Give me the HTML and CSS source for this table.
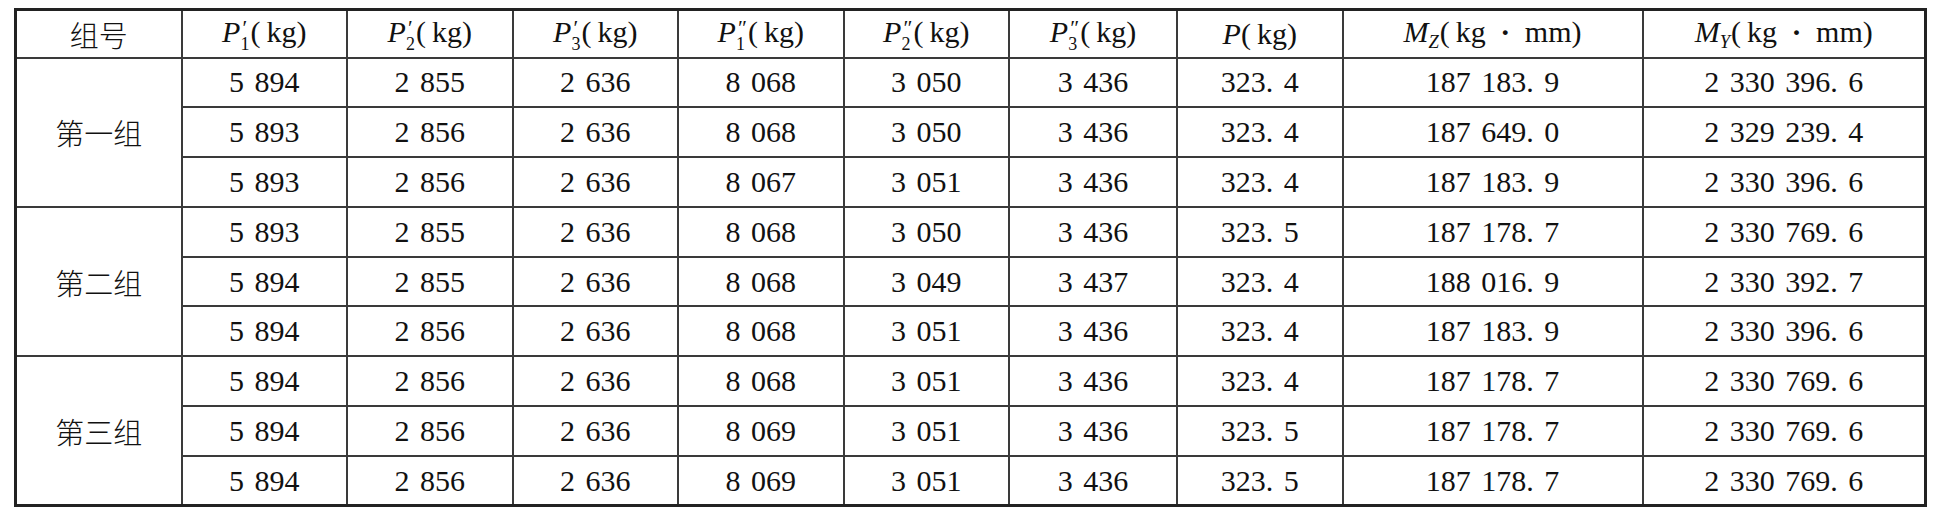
FILE: index.html
```html
<!DOCTYPE html>
<html>
<head>
<meta charset="utf-8">
<title>表</title>
<link rel="stylesheet" href="styles.css">
</head>
<body>
<table class="data">
  <colgroup>
    <col class="c-grp"><col class="c-n"><col class="c-n"><col class="c-n"><col class="c-n"><col class="c-n"><col class="c-n6"><col class="c-n"><col class="c-mz"><col class="c-my">
  </colgroup>
  <thead>
    <tr class="head">
      <th class="cjk">组号</th>
      <th><i>P</i><span class="stk"><span class="pr">′</span><span class="sb">1</span></span>(&#8201;kg)</th>
      <th><i>P</i><span class="stk"><span class="pr">′</span><span class="sb">2</span></span>(&#8201;kg)</th>
      <th><i>P</i><span class="stk"><span class="pr">′</span><span class="sb">3</span></span>(&#8201;kg)</th>
      <th><i>P</i><span class="stk"><span class="pr">″</span><span class="sb">1</span></span>(&#8201;kg)</th>
      <th><i>P</i><span class="stk"><span class="pr">″</span><span class="sb">2</span></span>(&#8201;kg)</th>
      <th><i>P</i><span class="stk"><span class="pr">″</span><span class="sb">3</span></span>(&#8201;kg)</th>
      <th><i>P</i>(&#8201;kg)</th>
      <th><i>M</i><span class="sub"><i>Z</i></span>(&#8201;kg <span class="dot">·</span> mm)</th>
      <th><i>M</i><span class="sub"><i>Y</i></span>(&#8201;kg <span class="dot">·</span> mm)</th>
    </tr>
  </thead>
  <tbody>
    <tr class="row"><td rowspan="3" class="cjk">第一组</td><td>5 894</td><td>2 855</td><td>2 636</td><td>8 068</td><td>3 050</td><td>3 436</td><td>323. 4</td><td>187 183. 9</td><td>2 330 396. 6</td></tr>
    <tr class="row"><td>5 893</td><td>2 856</td><td>2 636</td><td>8 068</td><td>3 050</td><td>3 436</td><td>323. 4</td><td>187 649. 0</td><td>2 329 239. 4</td></tr>
    <tr class="row"><td>5 893</td><td>2 856</td><td>2 636</td><td>8 067</td><td>3 051</td><td>3 436</td><td>323. 4</td><td>187 183. 9</td><td>2 330 396. 6</td></tr>
    <tr class="row"><td rowspan="3" class="cjk">第二组</td><td>5 893</td><td>2 855</td><td>2 636</td><td>8 068</td><td>3 050</td><td>3 436</td><td>323. 5</td><td>187 178. 7</td><td>2 330 769. 6</td></tr>
    <tr class="row"><td>5 894</td><td>2 855</td><td>2 636</td><td>8 068</td><td>3 049</td><td>3 437</td><td>323. 4</td><td>188 016. 9</td><td>2 330 392. 7</td></tr>
    <tr class="row"><td>5 894</td><td>2 856</td><td>2 636</td><td>8 068</td><td>3 051</td><td>3 436</td><td>323. 4</td><td>187 183. 9</td><td>2 330 396. 6</td></tr>
    <tr class="row"><td rowspan="3" class="cjk">第三组</td><td>5 894</td><td>2 856</td><td>2 636</td><td>8 068</td><td>3 051</td><td>3 436</td><td>323. 4</td><td>187 178. 7</td><td>2 330 769. 6</td></tr>
    <tr class="row"><td>5 894</td><td>2 856</td><td>2 636</td><td>8 069</td><td>3 051</td><td>3 436</td><td>323. 5</td><td>187 178. 7</td><td>2 330 769. 6</td></tr>
    <tr class="row"><td>5 894</td><td>2 856</td><td>2 636</td><td>8 069</td><td>3 051</td><td>3 436</td><td>323. 5</td><td>187 178. 7</td><td>2 330 769. 6</td></tr>
  </tbody>
</table>
</body>
</html>
```
FILE: styles.css
```css
html, body {
  margin: 0;
  background: #ffffff;
}
body {
  padding: 8px 0 0 14px;
  font-family: "Liberation Serif", serif;
  font-size: 30px;
  color: #111111;
}
.data {
  border-collapse: collapse;
  table-layout: fixed;
  width: 1910px;
  border: 3px solid #222222;
}
.c-grp { width: 166px; }
.c-n { width: 165.5px; }
.c-n6 { width: 168px; }
.c-mz { width: 300px; }
.c-my { width: 283px; }
.data th,
.data td {
  font-family: "Liberation Serif", serif;
  font-size: 30px;
  border: 2px solid #3a3a3a;
  text-align: center;
  vertical-align: middle;
  padding: 0;
  font-weight: normal;
  white-space: nowrap;
  word-spacing: 3px;
}
.data i {
  font-family: "Liberation Serif", serif;
  font-style: italic;
}
.head { height: 48px; }
.row { height: 49.8px; }
.data .cjk {
  font-family: "Noto Sans CJK SC", sans-serif;
  font-size: 29px;
  font-weight: 200;
}
.stk {
  display: inline-block;
  vertical-align: -0.45em;
  font-size: 0.6em;
  line-height: 0.9;
  text-align: left;
  margin-right: 1px;
}
.pr {
  display: block;
  font-size: 1.2em;
  line-height: 0.7;
  margin-left: 2px;
}
.sb { display: block; }
.sub {
  font-size: 0.62em;
  vertical-align: -0.35em;
  margin-right: 1px;
}
.dot {
  font-weight: bold;
  margin: 0 4px;
}
```
